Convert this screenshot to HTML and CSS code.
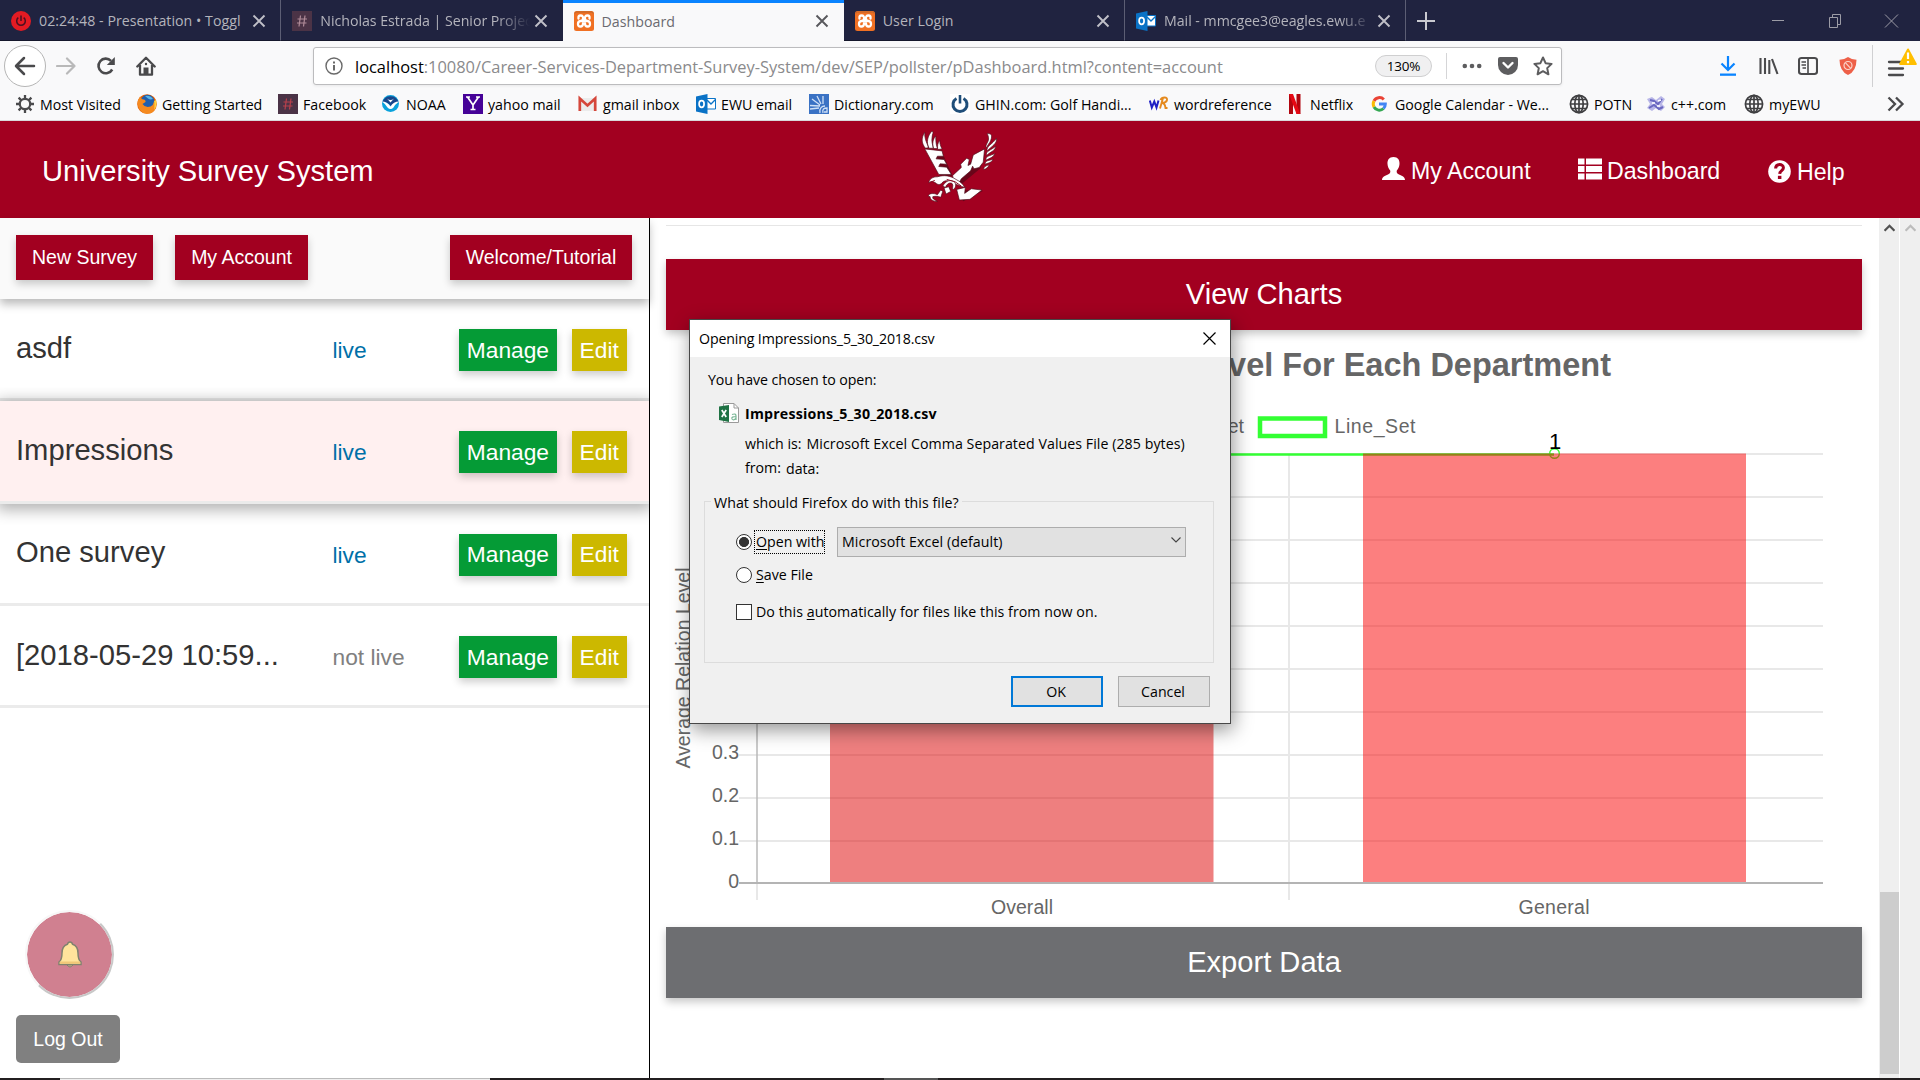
FILE: index.html
```html
<!DOCTYPE html>
<html lang="en">
<head>
<meta charset="utf-8">
<title>Dashboard</title>
<link rel="stylesheet" href="styles.css">
</head>
<body>
<svg class="defs" width="0" height="0" aria-hidden="true">
  <symbol id="x" viewBox="0 0 14 14"><path d="M1.5 1.5l11 11M12.5 1.5l-11 11" fill="none" stroke="currentColor" stroke-width="1.9"/></symbol>
  <symbol id="xampp" viewBox="0 0 20 20"><rect width="20" height="20" rx="2.5" fill="#f07023"/><path d="M1 2.500q0-1.500 1.500-1.500h15q1.500 0 1.500 1.500" fill="none" stroke="#b9652c"/><path d="M4.500 7.500Q4 4.500 6.500 4.500q3 0 2.500 3.500-.3 2-2.500 2-2.500.3-2.500 3t2.500 2.500Q9 15.500 9 12.500M15.500 7.500q.5-3-2-3-3 0-2.500 3.500.3 2 2.500 2 2.500.3 2.500 3t-2.500 2.500Q11 15.500 11 12.500M6.500 10h7" fill="none" stroke="#fff" stroke-width="2.300" stroke-linecap="round"/></symbol>
  <symbol id="outlook" viewBox="0 0 20 20"><path d="M10 4.500h9.500v10.500H10z" fill="#fff" stroke="#0b74c8"/><path d="M11 6l4 4 4.500-4.500" fill="none" stroke="#0b74c8" stroke-width="1.400"/><path d="M0 2.500L11.500 0v20L0 17.500z" fill="#0a72c6"/><ellipse cx="5.600" cy="10" rx="2.500" ry="3.300" fill="none" stroke="#fff" stroke-width="1.700"/></symbol>
  <symbol id="hash" viewBox="0 0 20 20"><rect width="20" height="20" fill="#4b3346"/><path d="M8.500 4.500l-1.500 11M13 4.500l-1.500 11M5.500 8h9.500M5 12h9.500" fill="none" stroke="currentColor" stroke-width="1.200"/></symbol>
  <symbol id="globe" viewBox="0 0 20 20"><g fill="none" stroke="#3f3f41" stroke-width="1.700"><circle cx="10" cy="10" r="8.600"/><ellipse cx="10" cy="10" rx="4.200" ry="8.600"/><path d="M10 1.500v17M1.500 10h17M3 5.500h14M3 14.500h14"/></g></symbol>
</svg>

<div class="tabs">
  <div class="tab">
    <svg class="fav" viewBox="0 0 20 20"><circle cx="10" cy="10" r="10" fill="#e31b23"/><path d="M7.300 6.700a4.300 4.300 0 1 0 5.400 0M10 4.500v5.500" fill="none" stroke="#4a1020" stroke-width="1.500"/></svg>
    <span class="label">02:24:48 - Presentation • Toggl</span><svg class="close"><use href="#x"/></svg>
  </div>
  <div class="tab nosep">
    <svg class="fav"><use href="#hash"/></svg>
    <span class="label fade tight">Nicholas Estrada | Senior Projec</span><svg class="close"><use href="#x"/></svg>
  </div>
  <div class="tab active">
    <svg class="fav"><use href="#xampp"/></svg>
    <span class="label">Dashboard</span><svg class="close"><use href="#x"/></svg>
  </div>
  <div class="tab">
    <svg class="fav"><use href="#xampp"/></svg>
    <span class="label">User Login</span><svg class="close"><use href="#x"/></svg>
  </div>
  <div class="tab">
    <svg class="fav"><use href="#outlook"/></svg>
    <span class="label fade tight">Mail - mmcgee3@eagles.ewu.e</span><svg class="close"><use href="#x"/></svg>
  </div>
  <svg class="plus" viewBox="0 0 18 18"><path d="M9 0v18M0 9h18" stroke="#c9c9d0" stroke-width="2"/></svg>
  <svg class="wincontrols" viewBox="0 0 128 14"><g fill="none" stroke="#9c9ca6" stroke-width="1"><path d="M0 6.500h12M57.500 3.500h8v10h-8zM60.500 3.500v-3h8v10h-3M113 .500l13 13M126 .500l-13 13"/></g></svg>
</div>

<div class="toolbar">
  <svg class="back" viewBox="0 0 42 42"><circle cx="21" cy="21" r="20.500" fill="#fff" stroke="#b5b5b5"/><path d="M30 21H12.500M20 13l-8 8 8 8" fill="none" stroke="#4a4a4c" stroke-width="2.500" stroke-linecap="round" stroke-linejoin="round"/></svg>
  <svg class="fwd" viewBox="0 0 20 20"><path d="M1 10h17.500M11 2.500l7.500 7.500-7.500 7.500" fill="none" stroke="#b9b9b9" stroke-width="2.200" stroke-linecap="round" stroke-linejoin="round"/></svg>
  <svg class="reload" viewBox="0 0 20 20"><path d="M16.200 13.500A7.300 7.300 0 1 1 15 4.800" fill="none" stroke="#4a4a4c" stroke-width="2.600"/><path d="M18.800 1v8h-8z" fill="#4a4a4c"/></svg>
  <svg class="home" viewBox="0 0 20 20"><path d="M1.300 10.500L10 1.700l8.700 8.800M4 9v9.700h12V9" fill="none" stroke="#4a4a4c" stroke-width="2.300" stroke-linejoin="round" stroke-linecap="round"/><path d="M7.500 11.500h5V18h-5z" fill="#4a4a4c"/><circle cx="10" cy="8" r="1.200" fill="#4a4a4c"/></svg>
  <div class="urlbar">
    <svg class="info" viewBox="0 0 18 18"><circle cx="9" cy="9" r="8" fill="none" stroke="#6a6a6a" stroke-width="1.400"/><path d="M9 8v5.500M9 4.500v2" stroke="#6a6a6a" stroke-width="2"/></svg>
    <span class="url"><b>localhost</b>:10080/Career-Services-Department-Survey-System/dev/SEP/pollster/pDashboard.html?content=account</span>
    <span class="zoom">130%</span>
    <i class="vsep"></i>
    <svg class="dots" viewBox="0 0 20 20"><g fill="#5d5d5f"><circle cx="2.800" cy="10" r="2.300"/><circle cx="10" cy="10" r="2.300"/><circle cx="17.200" cy="10" r="2.300"/></g></svg>
    <svg class="pocket" viewBox="0 0 20 20"><path d="M2 1h16q2 0 2 2v6a10 10 0 0 1-20 0V3q0-2 2-2z" fill="#5d5d5f"/><path d="M5.500 7l4.500 4.500L14.500 7" fill="none" stroke="#fff" stroke-width="2.400" stroke-linecap="round" stroke-linejoin="round"/></svg>
    <svg class="star" viewBox="0 0 20 20"><path d="M10 1.500l2.600 5.700 6 .7-4.400 4.200 1.200 6.200L10 15.200l-5.400 3.100 1.200-6.200L1.400 7.900l6-.7z" fill="none" stroke="#5d5d5f" stroke-width="2" stroke-linejoin="round"/></svg>
  </div>
  <svg class="dl" viewBox="0 0 16 20"><path d="M8 0v13.500M1.500 7.500L8 14l6.500-6.500" fill="none" stroke="#0a84ff" stroke-width="2.200"/><path d="M0 17.500h16v2.300H0z" fill="#0a84ff"/></svg>
  <svg class="lib" viewBox="0 0 20 20"><path d="M1.500 2v16M6 2v16M10.300 4v14M13 3l5.500 15" fill="none" stroke="#4a4a4c" stroke-width="2.100"/></svg>
  <svg class="side" viewBox="0 0 20 20"><rect x="1" y="2" width="18" height="16" rx="2.500" fill="none" stroke="#4a4a4c" stroke-width="2.100"/><path d="M10 2v16M3.500 6h4.500M3.500 9h4.500M4.500 12h3.500" stroke="#4a4a4c" stroke-width="1.600"/></svg>
  <svg class="shield" viewBox="0 0 18 18"><path d="M9 0q3.500 2.500 8.500 2.700 0 11.300-8.500 15.300Q.5 14 .5 2.700 5.500 2.500 9 0z" fill="#ee6048"/><circle cx="9" cy="8.500" r="4" fill="none" stroke="#fbd5cc" stroke-width="1.200"/><path d="M6.300 5.700l5.400 5.600" stroke="#fbd5cc" stroke-width="1.200"/></svg>
  <i class="barsep"></i>
  <svg class="menu" viewBox="0 0 32 40"><path d="M4 18h14M4 24.500h14M4 31h14" stroke="#4a4a4c" stroke-width="2.300" stroke-linecap="round"/><path d="M23 5.500l7.800 14.500H15.200z" fill="#ffbf00" stroke="#ffbf00" stroke-width="2" stroke-linejoin="round"/><path d="M23 8.500v6.500M23 17v2.200" stroke="#fff" stroke-width="2.200"/></svg>
</div>

<div class="bookmarks">
  <div class="bm"><svg viewBox="0 0 20 20"><circle cx="10" cy="10" r="5.200" fill="none" stroke="#4a4a4c" stroke-width="2.200"/><path d="M10 1v3.500M10 15.500V19M1 10h3.500M15.500 10H19M3.600 3.600l2.500 2.500M13.900 13.900l2.500 2.500M16.400 3.600l-2.500 2.500M6.100 13.900l-2.500 2.500" stroke="#4a4a4c" stroke-width="2.300"/></svg><span>Most Visited</span></div>
  <div class="bm"><svg viewBox="0 0 20 20"><circle cx="10" cy="10" r="9.800" fill="#e66000"/><circle cx="10.500" cy="8" r="7.200" fill="#1f5fae"/><path d="M8 2q5-1 8 3-3 1-5-.500z" fill="#57b4e6"/><path d="M.5 8Q2 4 3 2.500 4 5 6.500 5.500 9 6 8.500 8l-3 2q2.500 4 8 2.500 3-1.500 3.500-5 2.500 3 2 6Q17 20 9.500 19.800 1 18.500.5 8z" fill="#f58a1f"/><path d="M19 6q1.500 6-2 10 1-5 0-9z" fill="#ffd23c"/></svg><span>Getting Started</span></div>
  <div class="bm"><svg><use href="#hash"/></svg><span>Facebook</span></div>
  <div class="bm noaa"><svg viewBox="0 0 20 20"><circle cx="9.500" cy="9.500" r="8.500" fill="#0aa2dc"/><path d="M1.500 8a8.500 8.500 0 0 1 16 0q-4 .500-7 5-3-5-9-5z" fill="#17468c"/><path d="M1 7.500q5 0 8.500 5 3-5 8.500-5-4 3-5.500 6-3 3-6 0Q4.500 10 1 7.500z" fill="#fff"/><path d="M6 4.500q3.500 3 7 0l-3.500 4z" fill="#fff"/></svg><span>NOAA</span></div>
  <div class="bm"><svg viewBox="0 0 20 20"><rect width="20" height="20" fill="#460297"/><path d="M4.500 3l5.500 8 5.500-8M10 10.500V15.500M3 3h4M13 3h4M7.500 15.500h5" fill="none" stroke="#fff" stroke-width="1.700"/></svg><span>yahoo mail</span></div>
  <div class="bm"><svg viewBox="0 0 20 20"><path d="M1 4h17v13H1z" fill="#ececec"/><path d="M1.800 17V4.500l7.700 7 7.700-7V17" fill="none" stroke="#d5473b" stroke-width="2.700"/></svg><span>gmail inbox</span></div>
  <div class="bm"><svg><use href="#outlook"/></svg><span>EWU email</span></div>
  <div class="bm"><svg viewBox="0 0 20 20"><rect width="20" height="20" fill="#3a72c4"/><path d="M1 11.500L11 12M3 5l8 6M8 2l4 8M14 2v8M1 15l9-1M11 19c-1-5 2-7 5-7M14 19c-1-4 1-5 4-5v4h-3" fill="none" stroke="#cfe0f6" stroke-width="1.300"/></svg><span>Dictionary.com</span></div>
  <div class="bm"><svg viewBox="0 0 20 20"><rect width="20" height="20" fill="#fff"/><path d="M6.500 4.500a7 7 0 1 0 7 0" fill="none" stroke="#1f4e79" stroke-width="3"/><path d="M10 1v8.500" stroke="#1f4e79" stroke-width="2.600"/></svg><span>GHIN.com: Golf Handi...</span></div>
  <div class="bm"><svg viewBox="0 0 20 20"><path d="M.8 6.500l2 7 2.500-6 2.200 6 2-7" fill="none" stroke="#1f1fc4" stroke-width="2"/><path d="M11 14.500L14 4M11.500 6q1-2.500 4-2.500 3 0 2.500 2.500-.5 2.500-4.500 3 2.500.5 3 5h2" fill="none" stroke="#e58a1f" stroke-width="1.900"/></svg><span>wordreference</span></div>
  <div class="bm"><svg viewBox="0 0 20 20"><path d="M4 0h4v20l-4 .500zM11.500 0h4v20.500l-4-.500z" fill="#b1060f"/><path d="M4 0h4l7.500 20.500-4-.500z" fill="#e50914"/></svg><span>Netflix</span></div>
  <div class="bm"><svg viewBox="0 0 20 20"><g fill="none" stroke-width="3"><path d="M13.800 5.500A6 6 0 0 0 4 7" stroke="#ea4335"/><path d="M4 7a6.500 6.500 0 0 0 0 6" stroke="#fbbc05"/><path d="M4 13a6 6 0 0 0 9.500 1.500" stroke="#34a853"/><path d="M13.500 14.500q1.800-1.800 1.800-4.500H9" stroke="#4285f4"/></g></svg><span>Google Calendar - We...</span></div>
  <div class="bm"><svg><use href="#globe"/></svg><span>POTN</span></div>
  <div class="bm"><svg viewBox="0 0 20 20"><path d="M1 5l5-2 4 3 5-4 4 3-3 5 3 3-4 4-5-3-4 3-5-3 3-4z" fill="#b9b7e8"/><path d="M4 6l4 1 4 3 4-5M3 14l5-3 5 4 4-2" fill="none" stroke="#6a68c0" stroke-width="2"/><path d="M6 9l3 0M12 7l3-1M11 12h3" stroke="#fff" stroke-width="1.400"/></svg><span>c++.com</span></div>
  <div class="bm"><svg><use href="#globe"/></svg><span>myEWU</span></div>
  <svg class="more" viewBox="0 0 18 16"><path d="M1.500 1.500L8 8l-6.500 6.500M9 1.500L15.500 8 9 14.500" fill="none" stroke="#4a4a4c" stroke-width="2.300"/></svg>
</div>

<header class="site">
  <h1>University Survey System</h1>
  <svg class="logo" viewBox="60 27 240 220">
    <g fill="#3a0a14" opacity=".55" transform="translate(4 4)"><path d="M74 84l48 6 32 72-38-2zM160 158l90-72-12 52-60 50zM170 204l76 2-60 32z"/></g>
    <g fill="#fff" stroke="#4d0d1b" stroke-width="2" stroke-linejoin="round">
      <path d="M76 82c-14-16-12-34-2-48-2 14 4 30 12 46zM86 82c-8-18-4-38 10-52 6 4 0 10 0 18-2 12 0 20 4 34zM100 83c-4-14-2-28 7-38 0 12 0 24 5 38zM113 86c-2-12 0-20 6-28 0 8 1 16 7 26z"/>
      <path d="M74 84l52 6 4 16-18 0-4 8 24 2 8 14-20-1-4 8 24 2 14 22-38 0z"/>
      <path d="M158 164l26-24-2-10 18-18 8 4-4 18 8-4 8-28 34-18-4 40-12 16-16 4-4-8-6 14-28 24-8 14-16-6z"/>
      <path d="M262 38c16-2 16 10 8 26-8 10-8 14-10 16-6-6 6-16 6-26 0-8-2-12-4-16zM290 52c2 16-12 22-28 38-4-14 16-20 28-38zM288 76c-2 14-16 16-28 28-4-14 14-16 28-28zM286 98c-6 12-16 14-28 20-2-12 14-14 28-20zM280 116c-6 10-14 10-24 14-2-10 12-12 24-14zM268 132c-4 8-8 12-16 14-2-6 6-12 16-14z"/>
      <path d="M86 186c2-12 12-18 26-18 20-6 38-4 56 8 12 6 22 14 26 24-14-4-22-8-36-14-14-8-24-8-32 0-6 8-14 6-20 0-8-4-12-6-20 0z"/>
      <path d="M170 206l26-6-2 18 20-14 32 4-36 28-32 2z"/>
      <path d="M128 196c8-14 18-18 28-16 14 4 14 20 4 26-6-2 2-12-4-18-8-4-16 2-20 12zM132 202l14-4 6 14-14 8z"/>
      <path d="M84 226c2-8 16-10 28-4l10-14 6 4-6 18c-10-4-16-4-24-2-2 8 8 10 14 14-12 0-22-4-22-14z"/>
    </g>
    <path d="M92 184l12-5M140 176q28 4 44 20" stroke="#8d0a22" stroke-width="3" fill="none"/>
  </svg>
  <nav>
    <a class="n1"><svg viewBox="0 0 23 23"><path d="M11.500 0c4.500 0 6.200 3 6 7-.2 3-1.300 5-2.700 6.500-.5 2 .3 3 2.200 4 3 1.300 6 2.300 6 5.500H0c0-3.200 3-4.200 6-5.500 1.900-1 2.700-2 2.200-4C6.800 12 5.700 10 5.500 7c-.2-4 1.500-7 6-7z" fill="#fff"/></svg>My Account</a>
    <a class="n2"><svg viewBox="0 0 24 22"><path d="M0 .5h6.500v6H0zM8 .5h16v6H8zM0 8h6.500v6H0zM8 8h16v6H8zM0 15.500h6.500v6H0zM8 15.500h16v6H8z" fill="#fff"/></svg>Dashboard</a>
    <a class="n3"><svg viewBox="0 0 23 23"><circle cx="11.500" cy="11.500" r="11.300" fill="#fff"/><path d="M7.600 8.600c0-5.400 8-5 7.800-.7-.1 2.900-3.600 2.600-3.700 6" fill="none" stroke="#a20020" stroke-width="3"/><path d="M9.900 15.800h3.500V19H9.900z" fill="#a20020"/></svg>Help</a>
  </nav>
</header>

<div class="main">
  <aside>
    <div class="actions">
      <button class="btn red">New Survey</button>
      <button class="btn red">My Account</button>
      <button class="btn red last">Welcome/Tutorial</button>
    </div>
    <div class="row"><span class="name">asdf</span><span class="state">live</span><button class="btn green">Manage</button><button class="btn gold">Edit</button></div>
    <div class="row selected"><span class="name">Impressions</span><span class="state">live</span><button class="btn green">Manage</button><button class="btn gold">Edit</button></div>
    <div class="row"><span class="name">One survey</span><span class="state">live</span><button class="btn green">Manage</button><button class="btn gold">Edit</button></div>
    <div class="row"><span class="name">[2018-05-29 10:59...</span><span class="state off">not live</span><button class="btn green">Manage</button><button class="btn gold">Edit</button></div>
    <div class="foot">
      <button class="bell"><svg viewBox="0 0 24 27"><path d="M12 1q2 0 2.500 2.200Q20 5 20 12q0 7 3 9v2.500H1V21q3-2 3-9 0-7 5.500-8.800Q10 1 12 1z" fill="#ffe49c" stroke="#80826f" stroke-width="1.500"/><path d="M2 20.500h20l.5 2.300h-21z" fill="#f0c878"/><path d="M9 24q3 4 6 0z" fill="#d9b08c" stroke="#80826f"/></svg></button>
      <button class="logout">Log Out</button>
    </div>
  </aside>
  <section class="content">
    <hr>
    <div class="banner red">View Charts</div>
    <svg class="chart" viewBox="666 330 1196 597" width="1196" height="597">
      <text x="1611" y="375.500" text-anchor="end" class="ctitle">Average Relation Level For Each Department</text>
      <text x="1244" y="433" text-anchor="end" class="clabel">Bar_Set</text>
      <rect x="1260" y="418.500" width="65" height="17.500" fill="none" stroke="#33ff33" stroke-width="4.500"/>
      <text x="1334.500" y="433" textLength="81" class="clabel">Line_Set</text>
      <g stroke="#e8e8e8" stroke-width="2" shape-rendering="crispEdges">
        <path d="M739 454H1823M739 497H1823M739 540H1823M739 583H1823M739 626H1823M739 669H1823M739 712H1823M739 754.500H1823M739 797.500H1823M739 840.500H1823M1289 454V900M757 883V900"/>
      </g>
      <path d="M757 454V883" stroke="#b8b8b8" stroke-width="1.500"/>
      <path d="M739 883H1823" stroke="#b4b4b4" stroke-width="2"/>
      <path d="M1022 454.500H1554" stroke="#33ff33" stroke-width="2.600"/>
      <circle cx="1554.500" cy="453.500" r="4.800" fill="none" stroke="#33ff33" stroke-width="1.400"/>
      <rect x="830" y="497" width="383.500" height="385" fill="#dd0000" fill-opacity=".5"/>
      <rect x="1363" y="453.500" width="383" height="428.500" fill="#f90000" fill-opacity=".5"/>
      <text x="1555" y="449" text-anchor="middle" class="cpoint">1</text>
      <g class="clabel" text-anchor="end">
        <text x="739" y="758.500">0.3</text><text x="739" y="801.500">0.2</text><text x="739" y="844.500">0.1</text><text x="739" y="887.500">0</text>
      </g>
      <text x="1022" y="914" text-anchor="middle" textLength="62" class="clabel">Overall</text>
      <text x="1554" y="914" text-anchor="middle" textLength="71" class="clabel">General</text>
      <text transform="translate(690 668) rotate(-90)" text-anchor="middle" textLength="201" class="clabel">Average Relation Level</text>
    </svg>
    <div class="banner grey">Export Data</div>
  </section>
  <div class="scroll"><svg viewBox="0 0 10 8"><path d="M.500 6L5 1.500 9.500 6" fill="none" stroke="#505050" stroke-width="2"/></svg><div class="thumb"></div></div>
  <div class="scroll outer"><svg viewBox="0 0 10 8"><path d="M.500 6L5 1.500 9.500 6" fill="none" stroke="#bcbcbc" stroke-width="2"/></svg></div>
</div>
<div class="taskbar"><i class="light"></i><i class="mid"></i></div>

<div class="dialog">
  <div class="dtitle"><span>Opening Impressions_5_30_2018.csv</span><svg viewBox="0 0 13 13"><path d="M.500 .500l12 12M12.500 .500l-12 12" stroke="#000" stroke-width="1.200"/></svg></div>
  <div class="dbody">
    <p class="chosen">You have chosen to open:</p>
    <div class="file">
      <svg viewBox="0 0 20 20"><path d="M4.500 .500h10.500l4.500 4.500v14.500H4.500z" fill="#fff" stroke="#9a9a9a"/><path d="M15 .500v4.500h4.500" fill="none" stroke="#9a9a9a"/><path d="M0 3.500l10-1.500v17L0 17z" fill="#1f7244"/><path d="M2.800 7l4.400 7M7.200 7l-4.400 7" stroke="#fff" stroke-width="1.700"/><path d="M13 11.500q4-1.500 4 1.500v4M17 13.500q-5 0-4 2.500 1.500 2 4-.800" fill="none" stroke="#7cb898" stroke-width="1.200"/></svg>
      <strong>Impressions_5_30_2018.csv</strong>
    </div>
    <p class="meta"><span>which is:</span> <span class="kind">Microsoft Excel Comma Separated Values File (285 bytes)</span></p>
    <p class="meta from"><span>from:</span> <span class="src">data:</span></p>
    <div class="group">
      <span class="legend">What should Firefox do with this file?</span>
      <div class="opt o1"><i class="radio on"></i><span class="focus"><u>O</u>pen with</span><div class="select"><span>Microsoft Excel (default)</span><svg viewBox="0 0 10 6"><path d="M.500 .500L5 5 9.500 .500" fill="none" stroke="#444" stroke-width="1.100"/></svg></div></div>
      <div class="opt o2"><i class="radio"></i><span><u>S</u>ave File</span></div>
      <div class="opt o3"><i class="check"></i><span class="auto">Do this <u>a</u>utomatically for files like this from now on.</span></div>
    </div>
    <div class="buttons"><button class="ok">OK</button><button>Cancel</button></div>
  </div>
</div>
</body>
</html>
```
FILE: styles.css
```css
* { box-sizing: border-box; }
body { margin: 0; width: 1920px; height: 1080px; overflow: hidden; background: #fff; font-family: "Liberation Sans", Arial, sans-serif; position: relative; display: flex; flex-direction: column; }
svg { display: block; flex: none; }
button { font-family: inherit; border: 0; margin: 0; padding: 0; }
.defs { position: absolute; }

/* browser chrome */
.tabs, .toolbar, .bookmarks, .dialog { font-family: "Open Sans", "Noto Sans", sans-serif; font-size: 14.2px; }
.tabs { height: 41px; background: #202340; display: flex; align-items: center; flex: none; }
.tab { width: 281.250px; height: 41px; padding: 1px 14px 0 11px; display: flex; align-items: center; color: #b4b4bc; border-right: 1px solid #5c5e74; flex: none; border-bottom: 1px solid #15172c; }
.tab.nosep { border-right-color: transparent; }
.tab.active { background: #f9f9fa; color: #6a6a70; border: 0; border-top: 3px solid #0a84ff; padding-bottom: 2px; padding-top: 0; }
.fav { width: 20px; height: 20px; color: #b08b98; }
.label { margin-left: 8px; width: 210px; white-space: nowrap; line-height: 24px; padding-top: 1px; letter-spacing: .03px; }
.tight { letter-spacing: -.03px; }
.fade { -webkit-mask-image: linear-gradient(90deg, #000 84%, transparent 100%); mask-image: linear-gradient(90deg, #000 84%, transparent 100%); }
.close { width: 14px; height: 14px; margin-left: 4px; color: #c0c0c8; }
.active .close { color: #58585c; margin-left: 3px; }
.plus { width: 18px; height: 18px; margin-left: 11px; }
.wincontrols { width: 128px; height: 14px; margin-left: 337px; }

.toolbar { height: 49px; background: #f9f9fa; display: flex; align-items: center; flex: none; padding: 1px 0 0 4px; }
.back { width: 42px; height: 42px; }
.fwd { width: 20px; height: 20px; margin-left: 10px; }
.reload { width: 20px; height: 20px; margin-left: 20px; }
.home { width: 20px; height: 20px; margin-left: 20px; }
.urlbar { width: 1249px; height: 38px; margin-left: 157px; background: #fff; border: 1px solid #bcbcbe; border-radius: 3px; display: flex; align-items: center; padding-left: 11px; box-shadow: 0 1px 3px rgba(0,0,0,.07); }
.info { width: 18px; height: 18px; }
.url { margin-left: 12px; width: 1010px; white-space: nowrap; color: #8a8a8c; font-size: 16.420px; }
.url b { font-weight: 400; color: #000; }
.zoom { margin-left: 10px; width: 57px; height: 22px; border: 1px solid #cfcfd0; border-radius: 11px; background: #f0f0f1; font-size: 13.500px; line-height: 20px; text-align: center; letter-spacing: -.2px; }
.vsep { width: 1px; height: 26px; background: #d5d5d7; margin-left: 14px; }
.dots { width: 20px; height: 20px; margin-left: 15px; }
.pocket { width: 20px; height: 20px; margin-left: 16px; }
.star { width: 20px; height: 20px; margin-left: 15px; }
.dl { width: 16px; height: 20px; margin-left: 158px; }
.lib { width: 20px; height: 20px; margin-left: 23px; }
.side { width: 20px; height: 20px; margin-left: 19px; }
.shield { width: 18px; height: 18px; margin-left: 21px; }
.barsep { width: 1px; height: 42px; background: #d0d0d2; margin-left: 15px; }
.menu { width: 32px; height: 40px; margin-left: 12px; margin-bottom: 4px; }

.bookmarks { height: 31px; background: #f9f9fa; border-bottom: 1px solid #d8d8da; flex: none; padding: 0 0 2px 15px; display: grid; grid-template-columns: 122px 141px 103px 82px 115px 118px 113px 141px 199px 136px 85px 199px 77px 98px 142px 18px; align-items: center; }
.bm { display: flex; align-items: center; gap: 5px; color: #000; white-space: nowrap; }
.bm span { padding-top: 1px; }
.bm svg { width: 20px; height: 20px; color: #b8404c; }
.more { width: 18px; height: 16px; margin-left: 1px; }

/* page header */
.site { height: 97px; background: #a20020; color: #fff; display: flex; align-items: center; padding-left: 42px; flex: none; }
h1 { margin: 0; width: 878px; font-size: 29.120px; font-weight: 400; line-height: 34px; padding-top: 3px; }
.logo { width: 80px; height: 73px; margin-bottom: 6px; }
nav { display: flex; font-size: 23.150px; line-height: 27px; align-items: center; padding-top: 4px; }
nav a { display: flex; align-items: center; white-space: nowrap; }
.n1 { margin-left: 382px; width: 196px; }
.n1 svg { width: 23px; height: 23px; margin: 0 6px 7px 0; }
.n2 { width: 190px; }
.n2 svg { width: 24px; height: 22px; margin: 0 5px 5px 0; }
.n3 { padding-top: 1px; }
.n3 svg { width: 23px; height: 23px; margin: 0 6px 2px 0; }

/* page body */
.main { height: 860px; display: flex; flex: none; }
aside { width: 650px; border-right: 1px solid #000; display: flex; flex-direction: column; }
.actions { height: 81px; flex: none; background: #fafafa; display: flex; align-items: flex-start; padding: 17px 17px 0 16px; box-shadow: 0 5px 9px rgba(0,0,0,.28); position: relative; }
.btn { color: #fff; box-shadow: 0 4px 8px rgba(0,0,0,.2); }
.red { background: #a20020; }
.actions .btn { height: 45px; padding: 0 16px; font-size: 19.500px; margin-right: 22px; white-space: nowrap; }
.actions .btn.last { width: 182px; padding: 0; margin: 0 0 0 auto; }
.row { height: 102.330px; flex: none; border-bottom: 3px solid #ebebeb; display: flex; align-items: center; padding: 3px 22px 0 16px; background: #fff; }
.row.selected { background: #fff0f0; box-shadow: 0 3px 14px 3px rgba(0,0,0,.3); position: relative; clip-path: inset(-14px 0 -22px 0); }
.name { width: 316.500px; font-size: 29.200px; color: #333; padding-bottom: 4px; }
.state { width: 126.500px; font-size: 22.750px; color: #0070a8; padding-top: 1px; }
.state.off { color: #808080; }
.row .btn { height: 42px; padding: 0 7.800px; font-size: 22.750px; }
.green { background: #059b36; }
.gold { background: #ccb800; margin-left: 15px; }
.foot { margin-top: auto; padding: 0 0 15px 16px; display: flex; flex-direction: column; align-items: flex-start; gap: 16px; }
.bell { width: 89px; height: 89px; margin-left: 9px; border-radius: 50%; border: 2.600px solid; border-color: #f7f7f7 #c8c8c8 #c8c8c8 #f7f7f7; background: #d08090; background-clip: padding-box; display: flex; align-items: center; justify-content: center; }
.bell svg { width: 24px; height: 27px; }
.logout { width: 104px; height: 48px; background: #808080; color: #fff; border-radius: 5px; font-size: 19.500px; }

.content { width: 1229px; padding: 7px 17px 0 16px; display: flex; flex-direction: column; }
hr { margin: 0 0 33px; border: 0; height: 1px; background: #e6e6e6; flex: none; }
.banner { height: 71px; flex: none; color: #fff; font-size: 29.120px; line-height: 70px; text-align: center; box-shadow: 0 4px 8px rgba(0,0,0,.22); }
.grey { background: #6d6e71; }
.ctitle { font-size: 32.500px; font-weight: 700; fill: #666; }
.clabel { font-size: 19.500px; fill: #666; }
.cpoint { font-size: 22px; fill: #000; }
.scroll { width: 20px; background: #efefef; display: flex; flex-direction: column; align-items: center; padding-top: 6px; }
.scroll svg { width: 11px; height: 9px; }
.thumb { width: 19px; height: 182px; margin-top: 659px; background: #cdcdcd; }
.outer { width: 21px; border-left: 1px solid #fff; }
.taskbar { height: 2px; background: #231f20; display: flex; flex: none; }
.light { width: 430px; margin-left: 60px; background: #eee; border-top: 1px solid #bbb; }
.mid { width: 54px; margin-left: 394px; background: #555; }

/* download dialog, floating over the page */
.dialog { position: absolute; left: 689px; top: 319px; width: 542px; height: 405px; border: 1px solid #484848; background: #f0f0f0; box-shadow: 2px 6px 18px rgba(0,0,0,.42); color: #000; display: flex; flex-direction: column; }
.dialog p { margin: 0; }
.dtitle { height: 37px; background: #fff; display: flex; justify-content: space-between; align-items: center; padding: 0 14px 0 9px; letter-spacing: -.15px; }
.dtitle svg { width: 13px; height: 13px; }
.dbody { padding: 13px 16px 0 14px; line-height: 20px; }
.chosen { padding-left: 4px; height: 20px; letter-spacing: -.07px; }
.file { display: flex; align-items: center; gap: 6px; padding-left: 15px; height: 22px; margin-top: 12px; letter-spacing: .2px; }
.file strong { padding-top: 1px; }
.file svg { width: 20px; height: 20px; }
.meta { padding-left: 41px; height: 24px; margin-top: 10px !important; display: flex; gap: 5px; white-space: nowrap; }
.meta .kind { letter-spacing: .05px; }
.meta.from { margin-top: 0 !important; }
.src { padding-top: 1px; }
.group { position: relative; height: 162px; margin-top: 19px; border: 1px solid #dcdcdc; padding: 25px 0 0 31px; }
.legend { position: absolute; left: 6px; top: -9px; padding: 0 3px; background: #f0f0f0; line-height: 20px; white-space: nowrap; letter-spacing: .05px; }
.opt { display: flex; align-items: center; white-space: nowrap; }
.radio, .check { width: 16px; height: 16px; border: 1px solid #333; background: #fff; flex: none; }
.radio { border-radius: 50%; }
.radio.on { background: radial-gradient(circle, #333 0 4.700px, #fff 5.300px); }
.opt span { margin-left: 4px; }
.opt .focus { margin-left: 2px; width: 71px; height: 24px; line-height: 22px; border: 1px dotted #000; padding-left: 1px; }
.opt .auto { letter-spacing: .05px; }
.opt u { text-underline-offset: 2px; text-decoration-skip-ink: none; }
.select { width: 349px; height: 30px; margin-left: 12px; background: #e1e1e1; border: 1px solid #adadad; display: flex; align-items: center; justify-content: space-between; padding: 0 4px 0 0; letter-spacing: .08px; }
.select svg { width: 10px; height: 6px; margin-bottom: 4px; }
.o1 { height: 30px; }
.o2 { height: 20px; margin-top: 8px; }
.o3 { height: 20px; margin-top: 17px; }
.buttons { display: flex; justify-content: flex-end; gap: 15px; padding: 13px 4px 0 0; }
.buttons button { width: 92px; height: 31px; background: #e1e1e1; border: 1px solid #adadad; font-size: 14.200px; color: #000; padding-right: 2px; }
.buttons .ok { border: 2px solid #0078d7; }
```
